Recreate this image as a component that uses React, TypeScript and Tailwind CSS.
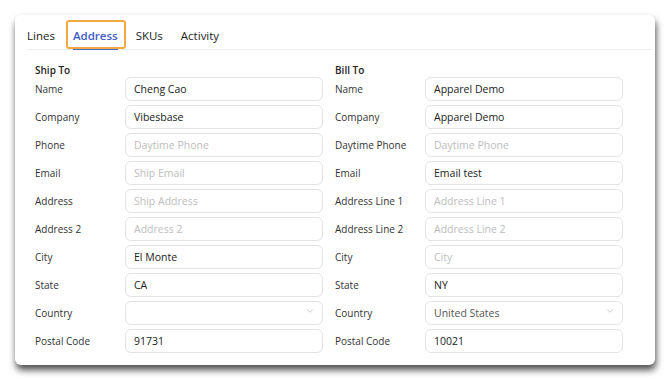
import { ChevronDown } from "lucide-react";

type Field = {
  label: string;
  value?: string;
  placeholder?: string;
  select?: boolean;
};

const shipTo: Field[] = [
  { label: "Name", value: "Cheng Cao" },
  { label: "Company", value: "Vibesbase" },
  { label: "Phone", placeholder: "Daytime Phone" },
  { label: "Email", placeholder: "Ship Email" },
  { label: "Address", placeholder: "Ship Address" },
  { label: "Address 2", placeholder: "Address 2" },
  { label: "City", value: "El Monte" },
  { label: "State", value: "CA" },
  { label: "Country", value: "", select: true },
  { label: "Postal Code", value: "91731" },
];

const billTo: Field[] = [
  { label: "Name", value: "Apparel Demo" },
  { label: "Company", value: "Apparel Demo" },
  { label: "Daytime Phone", placeholder: "Daytime Phone" },
  { label: "Email", value: "Email test" },
  { label: "Address Line 1", placeholder: "Address Line 1" },
  { label: "Address Line 2", placeholder: "Address Line 2" },
  { label: "City", placeholder: "City" },
  { label: "State", value: "NY" },
  { label: "Country", value: "United States", select: true },
  { label: "Postal Code", value: "10021" },
];

const tabs = ["Lines", "Address", "SKUs", "Activity"];

const Column = ({ title, fields }: { title: string; fields: Field[] }) => (
  <div className="flex flex-col w-[288px]">
    <h3 className="font-semibold text-[10px] leading-[12px] text-[#222] h-[12px] mb-[-1px]">
      {title}
    </h3>
    <div className="flex flex-col gap-[4px]">
      {fields.map((f, i) => (
        <div key={i} className="flex flex-row items-center h-[24px]">
          <label className="relative top-[2px] w-[90px] text-[10px] leading-[24px] text-[#333]">
            {f.label}
          </label>
          <div className="relative w-[198px] h-[24px]">
            <input
              readOnly
              type="text"
              defaultValue={f.value}
              placeholder={f.placeholder}
              className={`w-full h-full rounded-[6px] border border-[#e3e3e3] bg-white px-[8px] text-[10.5px] outline-none placeholder:text-[#bdbdbd] ${
                f.select ? "text-[#555]" : "text-[#222]"
              }`}
            />
            {f.select && (
              <ChevronDown
                size={10}
                strokeWidth={1.2}
                className="absolute right-[8px] top-[7px] text-[#999]"
              />
            )}
          </div>
        </div>
      ))}
    </div>
  </div>
);

const App = () => {
  return (
    <div
      className="w-[670px] h-[381px] bg-white pt-[15px] pl-[15px]"
      style={{ fontFamily: '"Open Sans", "Noto Sans", sans-serif' }}
    >
      <div className="w-[640px] h-[350px] bg-white rounded-[6px] shadow-[1px_5px_7px_rgba(0,0,0,0.7)] pt-[4px]">
        <div className="flex flex-row items-end gap-[18px] ml-[12px] mr-[3px] border-b border-[#ededed] h-[31px]">
          {tabs.map((t) => (
            <div
              key={t}
              className={`relative h-[29px] flex items-center pt-[3px] text-[11.5px] ${
                t === "Address" ? "text-[#3f5bc4] font-semibold" : "text-[#222]"
              }`}
            >
              {t}
              {t === "Address" && (
                <>
                  <span className="absolute left-0 right-0 bottom-[-1px] h-[2px] bg-[#4a63c8]" />
                  <span className="absolute left-[-7px] right-[-8px] top-0 bottom-[0px] rounded-[3px] border-[2.5px] border-[#f2a944]" />
                </>
              )}
            </div>
          ))}
        </div>
        <div className="flex flex-row gap-[12px] pl-[20px] pt-[14px]">
          <Column title="Ship To" fields={shipTo} />
          <Column title="Bill To" fields={billTo} />
        </div>
      </div>
    </div>
  );
};

export default App;
